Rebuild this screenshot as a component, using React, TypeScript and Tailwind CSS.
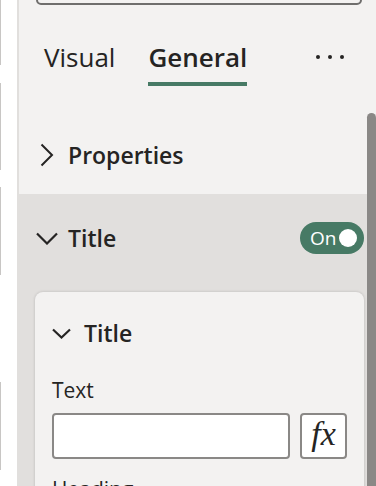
import React from 'react';

const font = { fontFamily: '"Open Sans", "Noto Sans", sans-serif' };

function ChevronRight() {
  return (
    <svg width="14" height="24" viewBox="0 0 14 24" fill="none">
      <polyline points="1.5,1.5 12,12 1.5,22.5" stroke="#252423" strokeWidth="2" />
    </svg>
  );
}

function ChevronDown({ w = 22, h = 13 }: { w?: number; h?: number }) {
  return (
    <svg width={w} height={h} viewBox={`0 0 ${w} ${h}`} fill="none">
      <polyline points={`1,1.5 ${w / 2},${h - 1.5} ${w - 1},1.5`} stroke="#252423" strokeWidth="2.2" />
    </svg>
  );
}

export default function App() {
  return (
    <div className="w-[376px] h-[486px] overflow-hidden flex text-[#252423]" style={font}>
      {/* left strip */}
      <div className="w-[17px] shrink-0 bg-white flex flex-col">
        <div className="h-[65px] border-l border-[#c8c6c4]" />
        <div className="h-[87px] mt-[18px] border-l border-[#c8c6c4]" />
        <div className="h-[88px] mt-[17px] border-l border-[#c8c6c4]" />
        <div className="h-[88px] mt-[107px] border-l border-[#c8c6c4]" />
      </div>
      <div className="w-[2px] shrink-0 bg-[#e1dfdd]" />

      {/* pane */}
      <div className="flex-1 bg-[#f3f2f1] flex flex-col min-w-0">
        <div className="h-[45px] -mt-[40px] ml-[17px] mr-[14px] shrink-0 border-2 border-[#6f6e6d] rounded-[5px]" />

        <div className="flex items-start pl-[25px] pr-[32px] pt-[34px] shrink-0">
          <div className="h-[36px] leading-[36px] text-[26px]">Visual</div>
          <div className="ml-[33px] flex flex-col">
            <div className="h-[36px] leading-[36px] text-[26px] font-semibold">General</div>
            <div className="mt-[7px] h-[4px] bg-[#477a65]" />
          </div>
          <div className="ml-auto h-[36px] flex items-center gap-[8px]">
            <span className="w-[4px] h-[4px] rounded-full bg-[#252423]" />
            <span className="w-[4px] h-[4px] rounded-full bg-[#252423]" />
            <span className="w-[4px] h-[4px] rounded-full bg-[#252423]" />
          </div>
        </div>

        <div className="mt-[24px] flex flex-1 min-h-0">
          <div className="flex-1 flex flex-col">
            <div className="h-[84px] shrink-0 flex items-center pl-[21px] pt-[6px]">
              <ChevronRight />
              <span className="ml-[14px] text-[23px] font-semibold leading-[31px]">Properties</span>
            </div>

            <div className="flex-1 bg-[#e1dfdd] flex flex-col">
              <div className="h-[88px] shrink-0 flex items-center pl-[17px] pr-[3px]">
                <ChevronDown w={22} h={13} />
                <span className="ml-[10px] text-[23px] font-semibold leading-[31px]">Title</span>
                <div className="ml-auto w-[64px] h-[32px] rounded-full bg-[#477a65] flex items-center pl-[10px] pr-[7px]">
                  <span className="text-white text-[19px] leading-[26px]">On</span>
                  <span className="ml-auto w-[18px] h-[18px] rounded-full bg-white" />
                </div>
              </div>

              <div className="mt-[10px] ml-[16px] mr-[3px] flex-1 rounded-t-[8px] bg-[#f3f2f1] shadow-[0_0_3px_rgba(0,0,0,0.18)] pl-[17px] pr-[16px]">
                <div className="h-[82px] flex items-center">
                  <ChevronDown w={19} h={11} />
                  <span className="ml-[13px] text-[23px] font-semibold leading-[31px]">Title</span>
                </div>
                <div className="mt-[2px] h-[28px] leading-[28px] text-[21px]">Text</div>
                <div className="mt-[9px] flex gap-[10px]">
                  <div className="w-[238px] h-[46px] bg-white border-2 border-[#8a8886] rounded-[4px]" />
                  <div className="w-[47px] h-[46px] bg-white border-2 border-[#8a8886] rounded-[4px] flex items-center justify-center">
                    <span className="italic text-[34px] leading-none -mt-[5px]" style={{ fontFamily: '"Liberation Serif", serif' }}>fx</span>
                  </div>
                </div>
                <div className="mt-[16px] h-[28px] leading-[28px] text-[21px]">Heading</div>
              </div>
            </div>
          </div>
          <div className="w-[9px] shrink-0 mt-[3px] rounded-t-[5px] bg-[#8a8886]" />
        </div>
      </div>
    </div>
  );
}
